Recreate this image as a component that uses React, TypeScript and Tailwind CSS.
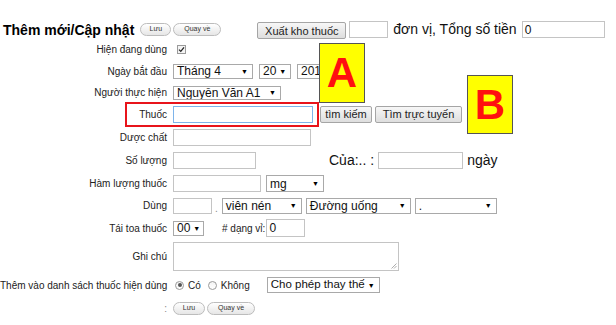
import type { ReactNode } from "react";

// plain old-school form, annotated with A / B markers
const Sel = ({ w, text, h = "h-[15px]", size = "text-[12px]" }: { w: string; text: string; h?: string; size?: string }) => (
  <span
    className={`${w} ${h} ${size} inline-flex items-center justify-between border border-[#a9a9a9] bg-white pl-[3px] pr-[4px] leading-none text-[#111] overflow-hidden whitespace-nowrap`}
  >
    <span>{text}</span>
    <span className="ml-[3px] text-[7px] text-black">▼</span>
  </span>
);

const Field = ({ w, h = "h-[17px]", value = "", focus = false }: { w: string; h?: string; value?: string; focus?: boolean }) => (
  <span
    className={`${w} ${h} inline-flex items-center border ${focus ? "border-[#7eb4ea]" : "border-[#c4c4c4]"} bg-white pl-[2px] text-[12px] leading-none text-[#111]`}
  >
    {value}
  </span>
);

const Btn = ({ w, children }: { w: string; children: ReactNode }) => (
  <span
    className={`${w} h-[17px] inline-flex items-center justify-center rounded-[2px] border border-[#a5a5a5] bg-gradient-to-b from-[#f7f7f7] to-[#dedede] text-[11px] text-[#222] whitespace-nowrap`}
  >
    {children}
  </span>
);

const Pill = ({ w, children }: { w: string; children: ReactNode }) => (
  <span
    className={`${w} h-[13px] inline-flex items-center justify-center rounded-full border border-[#bcbcbc] bg-gradient-to-b from-white to-[#e6e6e6] text-[7px] text-[#333] whitespace-nowrap`}
  >
    {children}
  </span>
);

const Radio = ({ on }: { on?: boolean }) => (
  <span className="w-[9px] h-[9px] rounded-full border border-[#9a9a9a] bg-gradient-to-b from-[#f4f4f4] to-white inline-flex items-center justify-center">
    {on && <span className="w-[4px] h-[4px] rounded-full bg-[#555]" />}
  </span>
);

const Row = ({ h, label, children }: { h: string; label: ReactNode; children?: ReactNode }) => (
  <div className={`flex items-center ${h}`}>
    <div className="w-[167px] shrink-0 text-right text-[10px] text-[#222] whitespace-nowrap">{label}</div>
    <div className="ml-[6px] flex items-center">{children}</div>
  </div>
);

export default function App() {
  return (
    <div className="relative w-[616px] h-[325px] overflow-hidden bg-white font-['Liberation_Sans',Arial,sans-serif]">
      {/* header */}
      <div className="mt-[21px] h-[17px] flex items-center pl-[3px]">
        <span className="text-[14px] font-bold text-black leading-none whitespace-nowrap">Thêm mới/Cập nhật</span>
        <span className="ml-[6px] flex gap-[2px]">
          <Pill w="w-[31px]">Lưu</Pill>
          <Pill w="w-[48px]">Quay về</Pill>
        </span>
        <span className="ml-[36px]">
          <Btn w="w-[89px]">Xuất kho thuốc</Btn>
        </span>
        <span className="ml-[3px] flex">
          <Field w="w-[39px]" />
        </span>
        <span className="ml-[5px] text-[14px] text-[#111] whitespace-nowrap">đơn vị, Tổng số tiền</span>
        <span className="ml-[5px] flex">
          <Field w="w-[83px]" value="0" />
        </span>
      </div>

      <Row h="h-[22px]" label="Hiện đang dùng">
        <span className="ml-[4px] w-[9px] h-[9px] border border-[#9a9a9a] bg-[#f4f4f4] inline-flex items-center justify-center">
          <svg width="7" height="7" viewBox="0 0 7 7">
            <path d="M1 3.6 L2.8 5.4 L6 1.4" stroke="#222" strokeWidth="1.3" fill="none" />
          </svg>
        </span>
      </Row>

      <Row h="h-[22px]" label="Ngày bắt đầu">
        <Sel w="w-[80px]" text="Tháng 4" />
        <span className="ml-[6px] flex"><Sel w="w-[32px]" text="20" /></span>
        <span className="ml-[6px] flex"><Sel w="w-[30px]" text="201" /></span>
      </Row>

      <Row h="h-[21px]" label="Người thực hiện">
        <Sel w="w-[108px]" h="h-[14px]" text="Nguyễn Văn A1" />
      </Row>

      <Row h="h-[23px]" label="Thuốc">
        <Field w="w-[140px]" focus />
        <span className="ml-[7px] flex"><Btn w="w-[52px]">tìm kiếm</Btn></span>
        <span className="ml-[3px] flex"><Btn w="w-[87px]">Tìm trực tuyến</Btn></span>
      </Row>

      <Row h="h-[23px]" label="Dược chất">
        <Field w="w-[138px]" />
      </Row>

      <Row h="h-[23px]" label="Số lượng">
        <Field w="w-[83px]" />
        <span className="ml-[73px] text-[14px] text-[#111] whitespace-nowrap">Của:.. :</span>
        <span className="ml-[4px] flex"><Field w="w-[85px]" /></span>
        <span className="ml-[4px] text-[14px] text-[#111]">ngày</span>
      </Row>

      <Row h="h-[23px]" label="Hàm lượng thuốc">
        <Field w="w-[88px]" />
        <span className="ml-[5px] flex"><Sel w="w-[58px]" h="h-[17px]" text="mg" /></span>
      </Row>

      <Row h="h-[21px]" label="Dùng">
        <Field w="w-[39px]" h="h-[16px]" />
        <span className="ml-[3px] mt-[6px] text-[10px] text-[#888]">.</span>
        <span className="ml-[4px] flex"><Sel w="w-[80px]" h="h-[16px]" text="viên nén" /></span>
        <span className="ml-[4px] flex"><Sel w="w-[105px]" h="h-[16px]" text="Đường uống" /></span>
        <span className="ml-[4px] flex"><Sel w="w-[82px]" h="h-[16px]" text="." /></span>
      </Row>

      <Row h="h-[24px]" label="Tái toa thuốc">
        <Sel w="w-[31px]" text="00" />
        <span className="ml-[18px] text-[10px] text-[#222] whitespace-nowrap"># dạng vỉ:</span>
        <span className="ml-[1px] flex"><Field w="w-[39px]" h="h-[18px]" value="0" /></span>
      </Row>

      <Row h="h-[33px]" label="Ghi chú">
        <span className="relative w-[226px] h-[29px] border border-[#c4c4c4] bg-white">
          <svg className="absolute right-[1px] bottom-[1px]" width="6" height="6" viewBox="0 0 6 6">
            <path d="M5.5 0.5 L0.5 5.5 M5.5 3 L3 5.5" stroke="#999" strokeWidth="0.8" />
          </svg>
        </span>
      </Row>

      <Row h="h-[24px]" label="Thêm vào danh sách thuốc hiện dùng">
        <span className="ml-[2px] flex items-center gap-[4px] text-[10px] text-[#222]">
          <Radio on /> <span>Có</span>
        </span>
        <span className="ml-[7px] flex items-center gap-[4px] text-[10px] text-[#222]">
          <Radio /> <span>Không</span>
        </span>
        <span className="ml-[17px] flex"><Sel w="w-[113px]" h="h-[16px]" size="text-[11.5px]" text="Cho phép thay thế" /></span>
      </Row>

      <Row h="h-[23px]" label={<span className="text-[#888]">:</span>}>
        <span className="flex gap-[2px]">
          <Pill w="w-[32px]">Lưu</Pill>
          <Pill w="w-[48px]">Quay về</Pill>
        </span>
      </Row>

      {/* annotations */}
      <div className="absolute left-[125px] top-[102px] w-[194px] h-[25px] border-2 border-[#e8141b]" />
      <div className="absolute left-[319px] top-[43px] w-[46px] h-[60px] border border-[#555] bg-[#ffff00] flex items-center justify-center">
        <span className="text-[42px] font-bold leading-none text-[#ff1010]">A</span>
      </div>
      <div className="absolute left-[467px] top-[75px] w-[46px] h-[59px] border border-[#555] bg-[#ffff00] flex items-center justify-center">
        <span className="text-[42px] font-bold leading-none text-[#ff1010]">B</span>
      </div>
    </div>
  );
}
